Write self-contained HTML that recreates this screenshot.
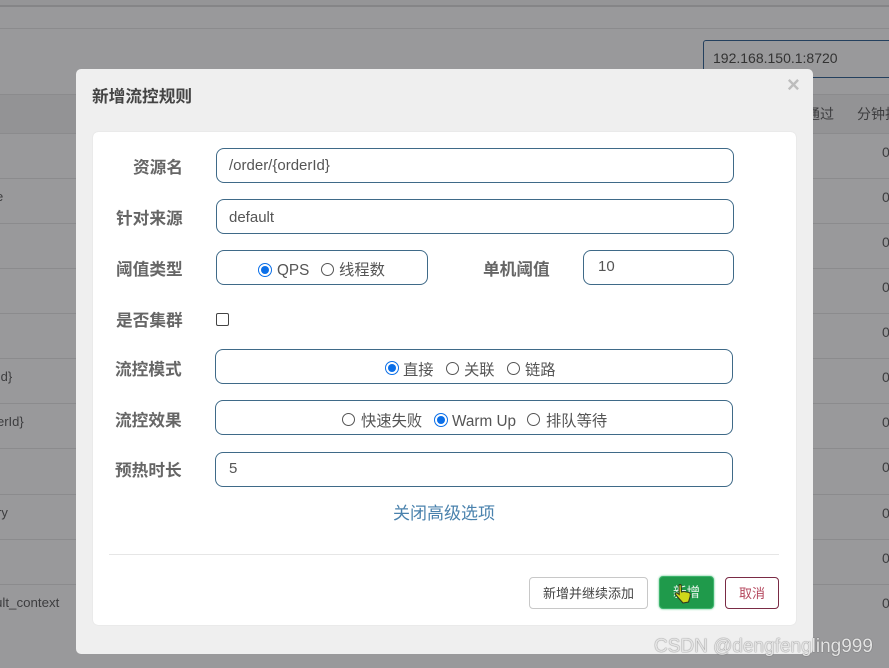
<!DOCTYPE html>
<html><head><meta charset="utf-8">
<style>
html,body{margin:0;padding:0}
body{width:889px;height:668px;overflow:hidden;position:relative;background:#99999b;font-family:"Liberation Sans","Noto Sans CJK SC",sans-serif;color:#555}
#w{position:absolute;left:0;top:0;width:889px;height:668px;overflow:hidden;background:#99999b;filter:blur(.35px)}
.a{position:absolute;white-space:nowrap;box-sizing:border-box}
.l{height:1px;left:0;width:889px;background:#8b8b8d}
.t{font-size:13px;color:#3d3d3f;line-height:16px}
.z{font-size:14px;color:#3d3d3f;line-height:16px}
.lb{font-size:16.7px;font-weight:bold;color:#666;line-height:22px}
.in{border:1px solid #3f6a88;border-radius:8px;background:#fff}
.v{font-size:15px;color:#555;line-height:18px}
.r{width:13px;height:13px;border-radius:50%;border:1.2px solid #555;background:#fff}
.rc{width:14px;height:14px;border-radius:50%;background:#fff;border:1.5px solid #0b6fe8}
.rc:after{content:"";position:absolute;left:1.5px;top:1.5px;width:8px;height:8px;border-radius:50%;background:#0b6fe8}
.o{font-size:15.3px;color:#555;line-height:18px}
</style></head><body><div id="w">
<div class="a" style="left:0;top:0;width:889px;height:5px;background:#959597"></div>
<div class="a" style="left:0;top:5px;width:889px;height:2px;background:#858587"></div>
<div class="a l" style="top:28px"></div>
<div class="a" style="left:0;top:94px;width:889px;height:39px;background:#939395"></div>
<div class="a l" style="top:94px"></div>
<div class="a l" style="top:133px"></div>
<div class="a l" style="top:178px"></div>
<div class="a l" style="top:223px"></div>
<div class="a l" style="top:268px"></div>
<div class="a l" style="top:313px"></div>
<div class="a l" style="top:358px"></div>
<div class="a l" style="top:403px"></div>
<div class="a l" style="top:448px"></div>
<div class="a l" style="top:494px"></div>
<div class="a l" style="top:539px"></div>
<div class="a l" style="top:584px"></div>
<div class="a" style="left:703px;top:40px;width:200px;height:38px;border:1px solid #24405e;border-radius:3px"></div>
<div class="a" style="left:713px;top:50px;font-size:14px;line-height:16px;color:#333">192.168.150.1:8720</div>
<div class="a z" style="left:806px;top:106px">通过</div>
<div class="a z" style="left:857px;top:106px">分钟拒绝</div>
<div class="a t" style="left:-4px;top:189px">e</div>
<div class="a t" style="left:-3px;top:369px">Id}</div>
<div class="a t" style="left:-3px;top:414px">erId}</div>
<div class="a t" style="left:-3px;top:505px">ry</div>
<div class="a t" style="left:-5px;top:595px;font-size:13.3px">ult_context</div>
<div class="a z" style="left:882px;top:144px">0</div>
<div class="a z" style="left:882px;top:189px">0</div>
<div class="a z" style="left:882px;top:234px">0</div>
<div class="a z" style="left:882px;top:279px">0</div>
<div class="a z" style="left:882px;top:324px">0</div>
<div class="a z" style="left:882px;top:369px">0</div>
<div class="a z" style="left:882px;top:414px">0</div>
<div class="a z" style="left:882px;top:459px">0</div>
<div class="a z" style="left:882px;top:505px">0</div>
<div class="a z" style="left:882px;top:550px">0</div>
<div class="a z" style="left:882px;top:595px">0</div>

<div class="a" style="left:76px;top:69px;width:737px;height:585px;background:#efefef;border-radius:5px"></div>
<div class="a" style="left:92px;top:85px;font-size:16.7px;font-weight:bold;color:#444;line-height:24px">新增流控规则</div>
<div class="a" style="left:787px;top:74px;font-size:22px;font-weight:bold;color:#bdbdbd;line-height:22px">×</div>
<div class="a" style="left:93px;top:132px;width:703px;height:493px;background:#fff;border-radius:5px;box-shadow:0 0 1px #ccc"></div>

<div class="a lb" style="left:133px;top:157px">资源名</div>
<div class="a lb" style="left:116px;top:208px">针对来源</div>
<div class="a lb" style="left:116px;top:259px">阈值类型</div>
<div class="a lb" style="left:116px;top:310px">是否集群</div>
<div class="a lb" style="left:483px;top:259px">单机阈值</div>
<div class="a lb" style="left:115px;top:359px">流控模式</div>
<div class="a lb" style="left:115px;top:410px">流控效果</div>
<div class="a lb" style="left:115px;top:460px">预热时长</div>

<div class="a in" style="left:216px;top:148px;width:518px;height:35px"></div>
<div class="a v" style="left:229px;top:157px">/order/{orderId}</div>
<div class="a in" style="left:216px;top:199px;width:518px;height:35px"></div>
<div class="a v" style="left:229px;top:209px">default</div>
<div class="a in" style="left:216px;top:250px;width:212px;height:35px"></div>
<div class="a rc" style="left:258px;top:263px"></div>
<div class="a o" style="left:277px;top:262px">QPS</div>
<div class="a r" style="left:321px;top:263px"></div>
<div class="a o" style="left:339px;top:262px">线程数</div>
<div class="a in" style="left:583px;top:250px;width:151px;height:35px"></div>
<div class="a v" style="left:598px;top:258px">10</div>
<div class="a" style="left:216px;top:313px;width:13px;height:13px;border:1.3px solid #444;border-radius:2px;background:#fff"></div>

<div class="a in" style="left:215px;top:349px;width:518px;height:35px"></div>
<div class="a rc" style="left:385px;top:361px"></div>
<div class="a o" style="left:403px;top:362px">直接</div>
<div class="a r" style="left:446px;top:362px"></div>
<div class="a o" style="left:464px;top:362px">关联</div>
<div class="a r" style="left:507px;top:362px"></div>
<div class="a o" style="left:525px;top:362px">链路</div>

<div class="a in" style="left:215px;top:400px;width:518px;height:35px"></div>
<div class="a r" style="left:342px;top:413px"></div>
<div class="a o" style="left:361px;top:413px">快速失败</div>
<div class="a rc" style="left:434px;top:413px"></div>
<div class="a o" style="left:452px;top:413px">Warm Up</div>
<div class="a r" style="left:527px;top:413px"></div>
<div class="a o" style="left:546px;top:413px">排队等待</div>

<div class="a in" style="left:215px;top:452px;width:518px;height:35px"></div>
<div class="a v" style="left:229px;top:460px">5</div>

<div class="a" style="left:393px;top:503px;font-size:17px;line-height:22px;color:#4a82ad">关闭高级选项</div>
<div class="a" style="left:109px;top:554px;width:670px;height:1px;background:#e6e6e6"></div>

<div class="a" style="left:529px;top:577px;width:119px;height:32px;border:1px solid #c8c8c8;border-radius:4px;background:#fff;font-size:13px;color:#444;line-height:31px;text-align:center">新增并继续添加</div>
<div class="a" style="left:659px;top:576px;width:55px;height:33px;background:#1f9a4b;border:1px solid #3cb46c;border-radius:4px;box-shadow:0 0 2px #57c285;font-size:13.5px;color:#e8f5ec;line-height:32px;text-align:center">新增</div>
<svg class="a" style="left:672px;top:583px" width="24" height="24" viewBox="0 0 24 24"><path d="M7 2.5 C7 1.2 9.2 1.2 9.2 2.5 L9.5 9 L12 8.5 L17 9.5 C18.5 10 18.5 12 18 14 L16.5 19 L11 20 L6.5 15 L3.5 11.5 C3 10 4.5 9.5 5.5 10.2 L7.2 11.5 Z" fill="#cfd81a" stroke="#2f3a20" stroke-width="1.1"/></svg>
<div class="a" style="left:725px;top:577px;width:54px;height:32px;border:1px solid #7a2b45;border-radius:4px;background:#fff;font-size:13px;color:#b4465c;line-height:31px;text-align:center">取消</div>

<div class="a" style="left:654px;top:637px;font-size:19px;line-height:20px;color:#e4e4e4;text-shadow:0 0 1px #444">CSDN @dengfengling999</div>
</div></body></html>
